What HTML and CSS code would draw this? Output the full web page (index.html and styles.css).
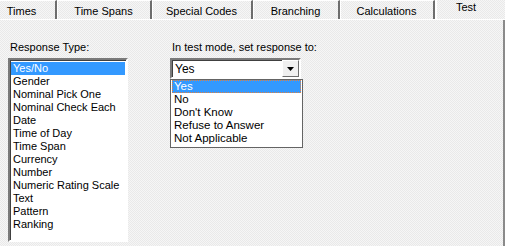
FILE: index.html
```html
<!DOCTYPE html>
<html lang="en">
<head>
  <meta charset="UTF-8" />
  <title>Test</title>
  <link rel="stylesheet" href="styles.css">
</head>
<body>
  <div class="window">
    <div class="tabs">
      <div class="tab first">Times</div>
      <div class="tab w95">Time Spans</div>
      <div class="tab w101">Special Codes</div>
      <div class="tab w87">Branching</div>
      <div class="tab w95">Calculations</div>
      <div class="tab active">Test</div>
    </div>

    <div class="panel">
      <div class="field">
        <label class="caption">Response Type:</label>
        <ul class="listbox">
          <li class="selected">Yes/No</li>
          <li>Gender</li>
          <li>Nominal Pick One</li>
          <li>Nominal Check Each</li>
          <li>Date</li>
          <li>Time of Day</li>
          <li>Time Span</li>
          <li>Currency</li>
          <li>Number</li>
          <li>Numeric Rating Scale</li>
          <li>Text</li>
          <li>Pattern</li>
          <li>Ranking</li>
        </ul>
      </div>

      <div class="field">
        <label class="caption">In test mode, set response to:</label>
        <div class="combo">
          <span class="combo-value">Yes</span>
          <span class="combo-button">
            <svg width="7" height="4" viewBox="0 0 7 4"><path d="M0 0h7L3.5 4z" fill="#000"/></svg>
          </span>
        </div>
        <ul class="dropdown">
          <li class="selected">Yes</li>
          <li>No</li>
          <li>Don't Know</li>
          <li>Refuse to Answer</li>
          <li>Not Applicable</li>
        </ul>
      </div>
    </div>
  </div>
</body>
</html>
```

FILE: styles.css
```css
body {
  margin: 0;
  font-family: 'Liberation Sans', Arial, sans-serif;
  font-size: 11px;
  color: #000;
  background: #f0f0f0;
}

.window {
  width: 505px;
  height: 246px;
  display: flex;
  flex-direction: column;
  background-color: #f0f0f0;
  background-image: repeating-conic-gradient(#f6f6f6 0 25%, #e9e9e9 0 50%);
  background-size: 2px 2px;
}

.tabs {
  display: flex;
  height: 19px;
  border-bottom: 1px solid #fff;
}

.tab {
  box-sizing: border-box;
  height: 19px;
  line-height: 21px;
  text-align: center;
  border-right: 2px solid #6d6d6d;
  box-shadow: 1px 0 0 #fff;
  border-top: 1px solid #fff;
}

.tab.first {
  width: 57px;
  padding-right: 12px;
}

.tab.w95 { width: 95px; }
.tab.w101 { width: 101px; }
.tab.w87 { width: 87px; }

.tab.active {
  flex: 1;
  height: 20px;
  line-height: 14px;
  padding-right: 10px;
  border-right: none;
  border-left: 1px solid #fff;
  border-top: none;
  box-shadow: none;
  margin-left: 1px;
  margin-bottom: -1px;
}

.panel {
  flex: 1;
  display: flex;
  gap: 42px;
  padding: 20px 0 0 8px;
  border-right: 2px solid #8a8a8a;
}

.field {
  display: flex;
  flex-direction: column;
}

.caption {
  height: 18px;
  line-height: 14px;
  padding-left: 2px;
}

.listbox,
.dropdown {
  list-style: none;
  margin: 0;
  padding: 0;
  background: #fff;
}

.listbox {
  box-sizing: border-box;
  width: 120px;
  height: 184px;
  padding: 2px 1px;
  border: 2px solid;
  border-color: #7a7a7a #fff #fff #7a7a7a;
  box-shadow: inset 1px 1px 0 #404040;
}

.listbox li,
.dropdown li {
  height: 13px;
  line-height: 13px;
  padding-left: 2px;
  color: #000;
}

.listbox li.selected,
.dropdown li.selected {
  background: #3399ff;
  color: #fff;
}

.dropdown li.selected {
  outline: 1px dotted #e08040;
  outline-offset: -1px;
}

.combo {
  box-sizing: border-box;
  width: 131px;
  height: 21px;
  display: flex;
  align-items: center;
  background: #fff;
  border: 2px solid;
  border-color: #7a7a7a #fff #fff #7a7a7a;
  box-shadow: inset 1px 1px 0 #404040;
}

.combo-value {
  flex: 1;
  padding-left: 3px;
  font-size: 12px;
}

.combo-button {
  box-sizing: border-box;
  width: 17px;
  height: 17px;
  display: flex;
  align-items: center;
  justify-content: center;
  background: #f0f0f0;
  border: 1px solid;
  border-color: #fff #6d6d6d #6d6d6d #fff;
}

.dropdown {
  box-sizing: border-box;
  width: 133px;
  padding: 0 1px 2px;
  border: 1px solid #646464;
  font-size: 11.5px;
}
```
